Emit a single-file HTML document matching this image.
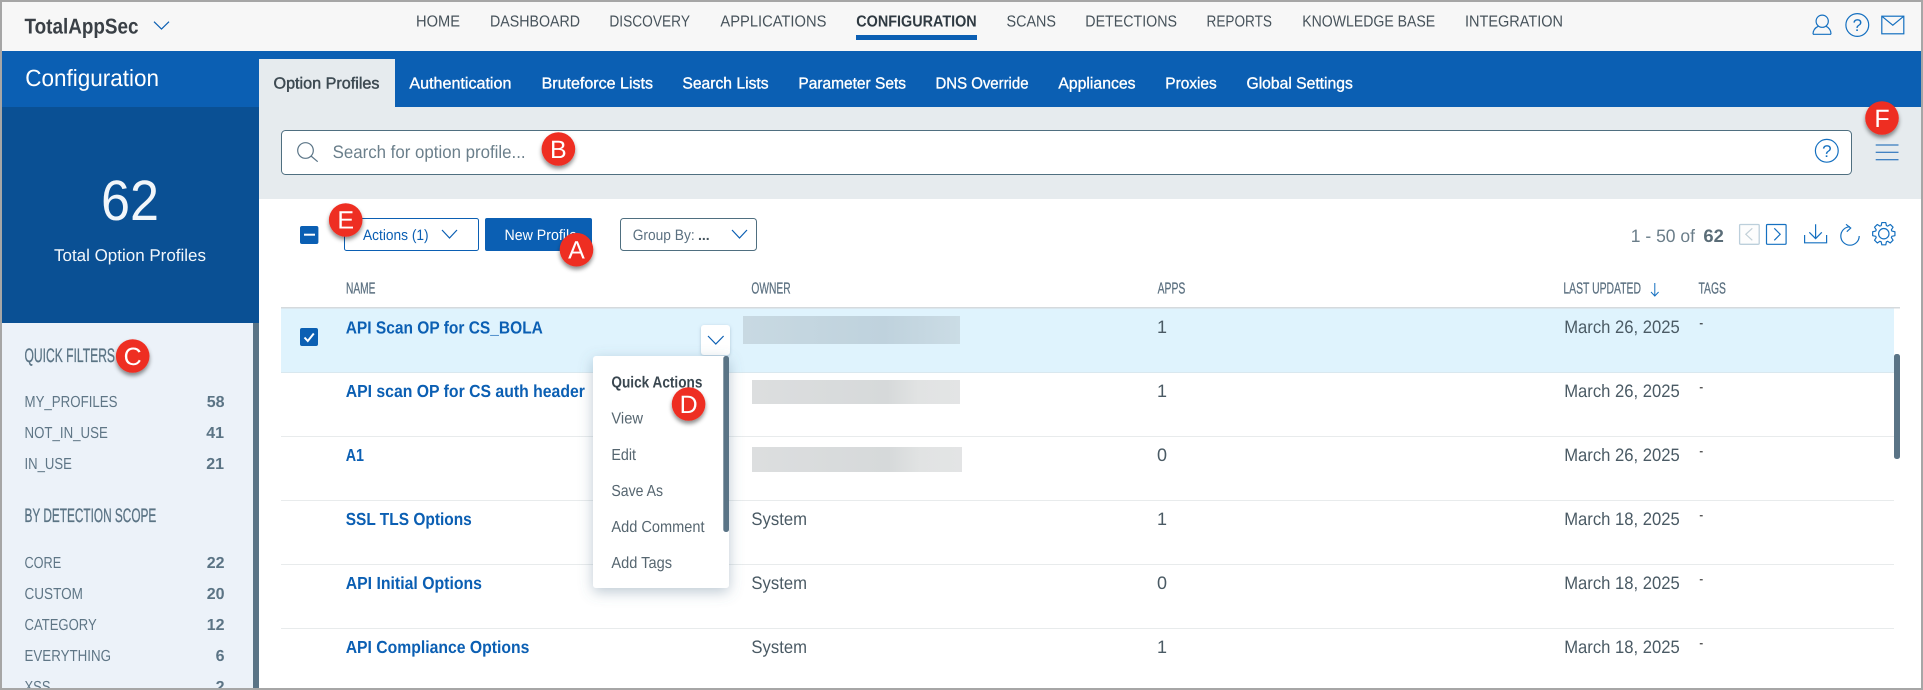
<!DOCTYPE html>
<html lang="en">
<head>
<meta charset="utf-8">
<title>TotalAppSec - Option Profiles</title>
<style>
html,body{margin:0;padding:0;width:1923px;height:690px;overflow:hidden;background:#fff}
svg{display:block}
text{font-family:"Liberation Sans",Arial,sans-serif;text-rendering:geometricPrecision}
.nav{font-size:16px;fill:#47535b}
.tab{font-size:16px;fill:#fff;stroke:#fff;stroke-width:.35px}
.th{font-size:16px;fill:#5b7080;stroke:#5b7080;stroke-width:.25px}
.name{font-size:17.5px;fill:#0b5fb3;font-weight:700}
.cell{font-size:18px;fill:#4a5a64}
.dash{font-size:12px;fill:#000}
.qa{font-size:16px;fill:#566670}
.fh{font-size:19.5px;fill:#5b7485;stroke:#5b7485;stroke-width:.3px}
.fi{font-size:16px;fill:#5f7686}
.fc{font-size:16px;fill:#5b7485;font-weight:700;text-anchor:end}
.bl{font-size:25px;fill:#fff;text-anchor:middle}
.ic{fill:none;stroke:#1570c0;stroke-width:1.2}
</style>
</head>
<body>
<svg xmlns="http://www.w3.org/2000/svg" width="1923" height="690" viewBox="0 0 1923 690">
<defs>
<filter id="bs" x="-50%" y="-50%" width="200%" height="200%"><feDropShadow dx="0" dy="3" stdDeviation="2.2" flood-color="#000" flood-opacity=".45"/></filter>
<filter id="ps" x="-30%" y="-30%" width="160%" height="160%"><feDropShadow dx="0" dy="4" stdDeviation="7" flood-color="#50708a" flood-opacity=".38"/></filter>
<filter id="cs" x="-30%" y="-30%" width="160%" height="160%"><feDropShadow dx="0" dy="1" stdDeviation="1.5" flood-color="#50708a" flood-opacity=".35"/></filter>
<linearGradient id="g1" x1="0" x2="1" y1="0" y2="0"><stop offset="0" stop-color="#c8d9e2"/><stop offset=".65" stop-color="#bfd2dd"/><stop offset="1" stop-color="#cbdce5"/></linearGradient>
<linearGradient id="g2" x1="0" x2="1" y1="0" y2="0"><stop offset="0" stop-color="#dcdedf"/><stop offset=".65" stop-color="#d6d9da"/><stop offset=".8" stop-color="#e1e3e3"/><stop offset="1" stop-color="#e3e4e5"/></linearGradient>
</defs>

<!-- base -->
<rect width="1923" height="690" fill="#fff"/>

<!-- header -->
<rect x="0" y="0" width="1923" height="51" fill="#f7f7f7"/>
<text x="24.5" y="33.3" font-size="21.5" font-weight="700" fill="#3a4046" textLength="114" lengthAdjust="spacingAndGlyphs">TotalAppSec</text>
<path d="M154 21.7 L161.5 29 L169 21.7" fill="none" stroke="#0b5fb3" stroke-width="1.2"/>
<text class="nav" x="416" y="26.3" textLength="44" lengthAdjust="spacingAndGlyphs">HOME</text>
<text class="nav" x="490" y="26.3" textLength="90" lengthAdjust="spacingAndGlyphs">DASHBOARD</text>
<text class="nav" x="609.4" y="26.3" textLength="80.6" lengthAdjust="spacingAndGlyphs">DISCOVERY</text>
<text class="nav" x="720.4" y="26.3" textLength="106" lengthAdjust="spacingAndGlyphs">APPLICATIONS</text>
<text class="nav" x="856.3" y="26.3" textLength="120.4" lengthAdjust="spacingAndGlyphs" font-weight="700" style="fill:#2f3a42">CONFIGURATION</text>
<rect x="856" y="35" width="121" height="5" fill="#0b5fb3"/>
<text class="nav" x="1006.5" y="26.3" textLength="49.5" lengthAdjust="spacingAndGlyphs">SCANS</text>
<text class="nav" x="1085.3" y="26.3" textLength="91.7" lengthAdjust="spacingAndGlyphs">DETECTIONS</text>
<text class="nav" x="1206.5" y="26.3" textLength="65.5" lengthAdjust="spacingAndGlyphs">REPORTS</text>
<text class="nav" x="1302.2" y="26.3" textLength="133" lengthAdjust="spacingAndGlyphs">KNOWLEDGE BASE</text>
<text class="nav" x="1465" y="26.3" textLength="98" lengthAdjust="spacingAndGlyphs">INTEGRATION</text>
<!-- user -->
<circle class="ic" cx="1822.2" cy="21.2" r="6.1"/>
<path class="ic" d="M1813 34.3 C1813 30.5 1815 27.8 1818.2 26.3 M1826.2 26.3 C1829.2 27.8 1831 30.5 1831 34.3 M1813 34.3 H1831"/>
<!-- help -->
<circle class="ic" cx="1857.3" cy="25" r="11.4"/>
<text x="1857.3" y="31" font-size="17" fill="#1570c0" text-anchor="middle">?</text>
<!-- mail -->
<rect class="ic" x="1881.8" y="16.2" width="22" height="17.6"/>
<path class="ic" d="M1881.8 16.2 L1892.8 25.2 L1903.8 16.2"/>

<!-- sidebar -->
<rect x="0" y="51" width="259" height="56" fill="#0b5fb3"/>
<text x="25.3" y="86" font-size="23.5" fill="#fff" textLength="133.7" lengthAdjust="spacingAndGlyphs">Configuration</text>
<rect x="0" y="107" width="259" height="216" fill="#0a5094"/>
<text x="101" y="220" font-size="57" fill="#f2f6fa" textLength="58" lengthAdjust="spacingAndGlyphs">62</text>
<text x="54" y="261" font-size="17" fill="#f2f6fa" textLength="152" lengthAdjust="spacingAndGlyphs">Total Option Profiles</text>
<rect x="0" y="323" width="253" height="367" fill="#ecf2f9"/>
<rect x="253" y="323" width="6" height="367" fill="#5a7486"/>
<text class="fh" x="24.5" y="362" textLength="90.5" lengthAdjust="spacingAndGlyphs">QUICK FILTERS</text>
<text class="fi" x="24.5" y="407" textLength="93" lengthAdjust="spacingAndGlyphs">MY_PROFILES</text><text class="fc" x="224.5" y="407">58</text>
<text class="fi" x="24.5" y="438" textLength="83.3" lengthAdjust="spacingAndGlyphs">NOT_IN_USE</text><text class="fc" x="224" y="438">41</text>
<text class="fi" x="24.5" y="469" textLength="47.3" lengthAdjust="spacingAndGlyphs">IN_USE</text><text class="fc" x="224" y="469">21</text>
<text class="fh" x="24.5" y="522" textLength="131.8" lengthAdjust="spacingAndGlyphs">BY DETECTION SCOPE</text>
<text class="fi" x="24.5" y="568" textLength="36.7" lengthAdjust="spacingAndGlyphs">CORE</text><text class="fc" x="224.5" y="568">22</text>
<text class="fi" x="24.5" y="599" textLength="58.4" lengthAdjust="spacingAndGlyphs">CUSTOM</text><text class="fc" x="224.5" y="599">20</text>
<text class="fi" x="24.5" y="630" textLength="72.2" lengthAdjust="spacingAndGlyphs">CATEGORY</text><text class="fc" x="224.5" y="630">12</text>
<text class="fi" x="24.5" y="661" textLength="86.5" lengthAdjust="spacingAndGlyphs">EVERYTHING</text><text class="fc" x="224.5" y="661">6</text>
<text class="fi" x="24.5" y="692" textLength="26" lengthAdjust="spacingAndGlyphs">XSS</text><text class="fc" x="224.5" y="692">2</text>

<!-- tabs -->
<rect x="259" y="51" width="1664" height="56" fill="#0b5fb3"/>
<rect x="259" y="59" width="136" height="48" fill="#e6ebee"/>
<text class="tab" x="273.5" y="88.3" textLength="106" lengthAdjust="spacingAndGlyphs" style="fill:#3d4a52;stroke:#3d4a52;stroke-width:.45px">Option Profiles</text>
<text class="tab" x="409.4" y="88.3" textLength="102" lengthAdjust="spacingAndGlyphs">Authentication</text>
<text class="tab" x="541.6" y="88.3" textLength="111.4" lengthAdjust="spacingAndGlyphs">Bruteforce Lists</text>
<text class="tab" x="682.4" y="88.3" textLength="86.2" lengthAdjust="spacingAndGlyphs">Search Lists</text>
<text class="tab" x="798.4" y="88.3" textLength="107.6" lengthAdjust="spacingAndGlyphs">Parameter Sets</text>
<text class="tab" x="935.5" y="88.3" textLength="93" lengthAdjust="spacingAndGlyphs">DNS Override</text>
<text class="tab" x="1058.4" y="88.3" textLength="77.1" lengthAdjust="spacingAndGlyphs">Appliances</text>
<text class="tab" x="1165.3" y="88.3" textLength="51.4" lengthAdjust="spacingAndGlyphs">Proxies</text>
<text class="tab" x="1246.5" y="88.3" textLength="106.3" lengthAdjust="spacingAndGlyphs">Global Settings</text>

<!-- search -->
<rect x="259" y="107" width="1664" height="92" fill="#e6ebee"/>
<rect x="281.5" y="130.5" width="1570" height="44" rx="4" fill="#fff" stroke="#4f6f80" stroke-width="1"/>
<circle cx="305.5" cy="150.5" r="7.8" fill="none" stroke="#5a7486" stroke-width="1.2"/>
<path d="M311 156 L317.7 161.7" stroke="#5a7486" stroke-width="1.2" fill="none"/>
<text x="332.6" y="158" font-size="18" fill="#6b7f8b" textLength="193" lengthAdjust="spacingAndGlyphs">Search for option profile...</text>
<circle class="ic" cx="1826.8" cy="150.8" r="11.4"/>
<text x="1826.8" y="156.8" font-size="17" fill="#1570c0" text-anchor="middle">?</text>
<path d="M1875.7 145 H1898.5 M1875.7 152.3 H1898.5 M1875.7 159.7 H1898.5" stroke="#0b5fb3" stroke-width="1" fill="none"/>

<!-- toolbar -->
<rect x="300" y="226" width="18.4" height="18" rx="2" fill="#0b5fb3"/>
<rect x="304" y="233.7" width="11" height="2" fill="#fff"/>
<rect x="344.5" y="218.5" width="134" height="32" rx="2" fill="#fff" stroke="#0b5fb3"/>
<text x="363" y="240" font-size="15" fill="#0b5fb3" textLength="65.6" lengthAdjust="spacingAndGlyphs">Actions (1)</text>
<path d="M442 230 L449.5 238 L457 230" fill="none" stroke="#0b5fb3" stroke-width="1.2"/>
<rect x="485" y="218" width="107" height="33" rx="2" fill="#0b5fb3"/>
<text x="504.5" y="240" font-size="15" fill="#fff" textLength="72.5" lengthAdjust="spacingAndGlyphs">New Profile</text>
<rect x="620.5" y="218.5" width="136" height="32" rx="3" fill="#fff" stroke="#4f6f80"/>
<text x="632.7" y="240" font-size="15" fill="#5b7080" textLength="62" lengthAdjust="spacingAndGlyphs">Group By:</text>
<text x="698" y="240" font-size="14" font-weight="700" fill="#44535d">...</text>
<path d="M732 230 L739.5 238 L747 230" fill="none" stroke="#0b5fb3" stroke-width="1.2"/>

<!-- pagination -->
<text x="1630.8" y="242" font-size="18" fill="#6a7d89" textLength="64.2" lengthAdjust="spacingAndGlyphs">1 - 50 of</text>
<text x="1703.4" y="242" font-size="18" font-weight="700" fill="#5b6d78" textLength="20.4" lengthAdjust="spacingAndGlyphs">62</text>
<rect x="1739.6" y="224.5" width="19.6" height="19.8" rx="1" fill="#fdfdfd" stroke="#bccfdb" stroke-width="1.3"/>
<path d="M1752.3 228.3 L1745.8 234.3 L1752.3 240.3" fill="none" stroke="#c2d0d8" stroke-width="1.2"/>
<rect x="1766.5" y="224.5" width="19.6" height="19.8" rx="1" fill="#fff" stroke="#1570c0" stroke-width="1.2"/>
<path d="M1774.3 228.3 L1780.2 234.3 L1774.3 240.3" fill="none" stroke="#1570c0" stroke-width="1.2"/>
<path class="ic" d="M1815.6 224.3 V238.3 M1809.3 232.3 L1815.6 238.6 L1821.8 232.3 M1804.6 235 V242.8 H1826.6 V235"/>
<path class="ic" d="M1850 226.8 A9.2 9.2 0 1 0 1859.2 236 M1846 224.3 L1850.7 228 L1846.8 231.7"/>
<polygon class="ic" transform="translate(1883.8 233.7)" stroke-linejoin="round" points="8.08,-2.63 11.13,-1.96 11.13,1.96 8.08,2.63 7.57,3.85 9.25,6.48 6.48,9.25 3.85,7.57 2.63,8.08 1.96,11.13 -1.96,11.13 -2.63,8.08 -3.85,7.57 -6.48,9.25 -9.25,6.48 -7.57,3.85 -8.08,2.63 -11.13,1.96 -11.13,-1.96 -8.08,-2.63 -7.57,-3.85 -9.25,-6.48 -6.48,-9.25 -3.85,-7.57 -2.63,-8.08 -1.96,-11.13 1.96,-11.13 2.63,-8.08 3.85,-7.57 6.48,-9.25 9.25,-6.48 7.57,-3.85"/>
<circle class="ic" cx="1883.8" cy="233.7" r="5.2"/>

<!-- table header -->
<text class="th" x="346" y="293.3" textLength="29.5" lengthAdjust="spacingAndGlyphs">NAME</text>
<text class="th" x="751.4" y="293.3" textLength="39.2" lengthAdjust="spacingAndGlyphs">OWNER</text>
<text class="th" x="1157.6" y="293.3" textLength="27.7" lengthAdjust="spacingAndGlyphs">APPS</text>
<text class="th" x="1563.4" y="293.3" textLength="77.6" lengthAdjust="spacingAndGlyphs">LAST UPDATED</text>
<path d="M1654.8 283 V296 M1651 292 L1654.8 296 L1658.6 292" fill="none" stroke="#1570c0" stroke-width="1"/>
<text class="th" x="1698.5" y="293.3" textLength="27.4" lengthAdjust="spacingAndGlyphs">TAGS</text>
<rect x="281" y="307" width="1619" height="1.5" fill="#d5dadd"/>

<!-- rows -->
<rect x="281" y="308.5" width="1613" height="64" fill="#dff3fd"/>
<rect x="281" y="372" width="1613" height="1" fill="#d9e8ef"/>
<rect x="281" y="436" width="1613" height="1" fill="#e8ebec"/>
<rect x="281" y="500" width="1613" height="1" fill="#e8ebec"/>
<rect x="281" y="564" width="1613" height="1" fill="#e8ebec"/>
<rect x="281" y="628" width="1613" height="1" fill="#e8ebec"/>

<rect x="300" y="328" width="18" height="18" rx="2" fill="#0b5fb3"/>
<path d="M304.5 337.5 L307.8 341 L313.8 333.5" fill="none" stroke="#fff" stroke-width="2"/>

<text class="name" x="345.7" y="333.3" textLength="197.2" lengthAdjust="spacingAndGlyphs">API Scan OP for CS_BOLA</text>
<text class="name" x="345.7" y="397" textLength="239.2" lengthAdjust="spacingAndGlyphs">API scan OP for CS auth header</text>
<text class="name" x="345.7" y="461" textLength="18.3" lengthAdjust="spacingAndGlyphs">A1</text>
<text class="name" x="345.7" y="525" textLength="126.1" lengthAdjust="spacingAndGlyphs">SSL TLS Options</text>
<text class="name" x="345.7" y="589" textLength="136.3" lengthAdjust="spacingAndGlyphs">API Initial Options</text>
<text class="name" x="345.7" y="653" textLength="183.7" lengthAdjust="spacingAndGlyphs">API Compliance Options</text>

<rect x="743" y="316" width="217" height="28" fill="url(#g1)"/>
<rect x="752" y="380" width="208" height="24" fill="url(#g2)"/>
<rect x="752" y="447" width="210" height="25" fill="url(#g2)"/>
<text class="cell" x="751.4" y="525" textLength="55.6" lengthAdjust="spacingAndGlyphs">System</text>
<text class="cell" x="751.4" y="589" textLength="55.6" lengthAdjust="spacingAndGlyphs">System</text>
<text class="cell" x="751.4" y="653" textLength="55.6" lengthAdjust="spacingAndGlyphs">System</text>

<text class="cell" x="1157" y="333">1</text>
<text class="cell" x="1157" y="397">1</text>
<text class="cell" x="1157" y="461">0</text>
<text class="cell" x="1157" y="525">1</text>
<text class="cell" x="1157" y="589">0</text>
<text class="cell" x="1157" y="653">1</text>

<text class="cell" x="1564.2" y="333" textLength="115.5" lengthAdjust="spacingAndGlyphs">March 26, 2025</text>
<text class="cell" x="1564.2" y="397" textLength="115.5" lengthAdjust="spacingAndGlyphs">March 26, 2025</text>
<text class="cell" x="1564.2" y="461" textLength="115.5" lengthAdjust="spacingAndGlyphs">March 26, 2025</text>
<text class="cell" x="1564.2" y="525" textLength="115.5" lengthAdjust="spacingAndGlyphs">March 18, 2025</text>
<text class="cell" x="1564.2" y="589" textLength="115.5" lengthAdjust="spacingAndGlyphs">March 18, 2025</text>
<text class="cell" x="1564.2" y="653" textLength="115.5" lengthAdjust="spacingAndGlyphs">March 18, 2025</text>

<text class="dash" x="1699.3" y="327">-</text>
<text class="dash" x="1699.3" y="391">-</text>
<text class="dash" x="1699.3" y="455">-</text>
<text class="dash" x="1699.3" y="519">-</text>
<text class="dash" x="1699.3" y="583">-</text>
<text class="dash" x="1699.3" y="647">-</text>

<!-- table scrollbar -->
<rect x="1894" y="354" width="6" height="105" rx="2.5" fill="#5a7486"/>

<!-- row action chevron -->
<rect x="701" y="325" width="29" height="30" rx="3" fill="#fff" filter="url(#cs)"/>
<path d="M708 336 L715.8 344 L723.6 336" fill="none" stroke="#0b5fb3" stroke-width="1.2"/>

<!-- popup -->
<rect x="593" y="356" width="136" height="232" rx="3" fill="#fff" filter="url(#ps)"/>
<rect x="723.3" y="356" width="5.7" height="176" rx="2.5" fill="#5a7486"/>
<text x="611.4" y="387.7" font-size="16" font-weight="700" fill="#3a4750" textLength="91" lengthAdjust="spacingAndGlyphs">Quick Actions</text>
<text class="qa" x="611.4" y="423.7" textLength="31.6" lengthAdjust="spacingAndGlyphs">View</text>
<text class="qa" x="611.4" y="460" textLength="24.6" lengthAdjust="spacingAndGlyphs">Edit</text>
<text class="qa" x="611.4" y="496" textLength="51.6" lengthAdjust="spacingAndGlyphs">Save As</text>
<text class="qa" x="611.4" y="532" textLength="93.1" lengthAdjust="spacingAndGlyphs">Add Comment</text>
<text class="qa" x="611.4" y="568" textLength="60.6" lengthAdjust="spacingAndGlyphs">Add Tags</text>

<!-- callout badges -->
<g filter="url(#bs)" fill="#ee2e24">
<circle cx="576.5" cy="249.7" r="16.8"/>
<circle cx="558.4" cy="149" r="16.8"/>
<circle cx="132.7" cy="356" r="16.8"/>
<circle cx="688.6" cy="404" r="16.8"/>
<circle cx="345.7" cy="220" r="16.8"/>
<circle cx="1882" cy="118" r="16.8"/>
</g>
<text class="bl" x="576.5" y="258.5">A</text>
<text class="bl" x="558.4" y="158">B</text>
<text class="bl" x="132.7" y="365">C</text>
<text class="bl" x="688.6" y="413">D</text>
<text class="bl" x="345.7" y="228.7">E</text>
<text class="bl" x="1882" y="127">F</text>

<!-- screenshot frame -->
<rect x="0" y="0" width="1923" height="2" fill="#a6a6a6"/>
<rect x="0" y="688" width="1923" height="2" fill="#a6a6a6"/>
<rect x="0" y="0" width="2" height="690" fill="#a6a6a6"/>
<rect x="1921" y="0" width="2" height="690" fill="#a6a6a6"/>
</svg>
</body>
</html>
